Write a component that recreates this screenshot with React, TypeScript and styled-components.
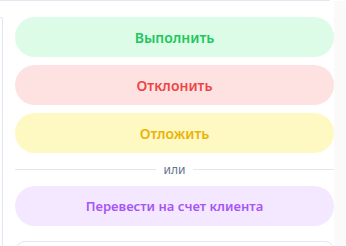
import styled, { createGlobalStyle } from "styled-components";

const GlobalStyle = createGlobalStyle`
  html, body {
    margin: 0;
    padding: 0;
    background: #ffffff;
    font-family: "Noto Sans", "Open Sans", sans-serif;
  }
`;

type Tone = "green" | "red" | "yellow" | "purple";

const tones: Record<Tone, { bg: string; fg: string }> = {
  green: { bg: "#dcfce7", fg: "#22c55e" },
  red: { bg: "#fee2e2", fg: "#ef4444" },
  yellow: { bg: "#fef9c3", fg: "#eab308" },
  purple: { bg: "#f3e8ff", fg: "#a855f7" },
};

export default function App() {
  return (
    <>
      <GlobalStyle />
      <Page>
        <TopCardEdge />
        <Row>
          <LeftRail />
          <Main>
            <ActionButton $tone="green">Выполнить</ActionButton>
            <ActionButton $tone="red">Отклонить</ActionButton>
            <ActionButton $tone="yellow">Отложить</ActionButton>
            <Divider>
              <Line />
              <span>или</span>
              <Line />
            </Divider>
            <ActionButton $tone="purple" $small>Перевести на счет клиента</ActionButton>
            <NextCard />
          </Main>
          <RightStrip />
        </Row>
      </Page>
    </>
  );
}

const Page = styled.div`
  width: 346px;
  height: 246px;
  overflow: hidden;
  display: flex;
  flex-direction: column;
`;

const TopCardEdge = styled.div`
  width: 330px;
  height: 0;
  border-bottom: 1px solid #e2e8f0;
  border-bottom-right-radius: 6px;
  flex-shrink: 0;
`;

const Row = styled.div`
  flex: 1;
  display: flex;
`;

const LeftRail = styled.div`
  width: 2px;
  margin-top: 16px;
  border-right: 1px solid #e2e8f0;
  border-top: 1px solid #e2e8f0;
  border-top-right-radius: 6px;
  flex-shrink: 0;
`;

const Main = styled.div`
  width: 319px;
  padding: 16px 0 0 12px;
  display: flex;
  flex-direction: column;
  gap: 8px;
`;

const RightStrip = styled.div`
  flex: 1;
  background: #fafafa;
`;

const ActionButton = styled.button<{ $tone: Tone; $small?: boolean }>`
  height: 40px;
  width: 100%;
  border: none;
  border-radius: 20px;
  padding: 0;
  background: ${({ $tone }) => tones[$tone].bg};
  color: ${({ $tone }) => tones[$tone].fg};
  font-family: inherit;
  font-size: ${({ $small }) => ($small ? "13px" : "14px")};
  font-weight: 600;
  cursor: pointer;
  flex-shrink: 0;
`;

const Divider = styled.div`
  height: 17px;
  display: flex;
  align-items: center;
  gap: 8px;
  font-size: 12px;
  color: #64748b;
  flex-shrink: 0;
`;

const Line = styled.div`
  flex: 1;
  height: 1px;
  background: #e2e8f0;
`;

const NextCard = styled.div`
  margin-top: 7px;
  height: 30px;
  width: 318px;
  border: 1px solid #e2e8f0;
  border-radius: 10px;
  flex-shrink: 0;
`;
